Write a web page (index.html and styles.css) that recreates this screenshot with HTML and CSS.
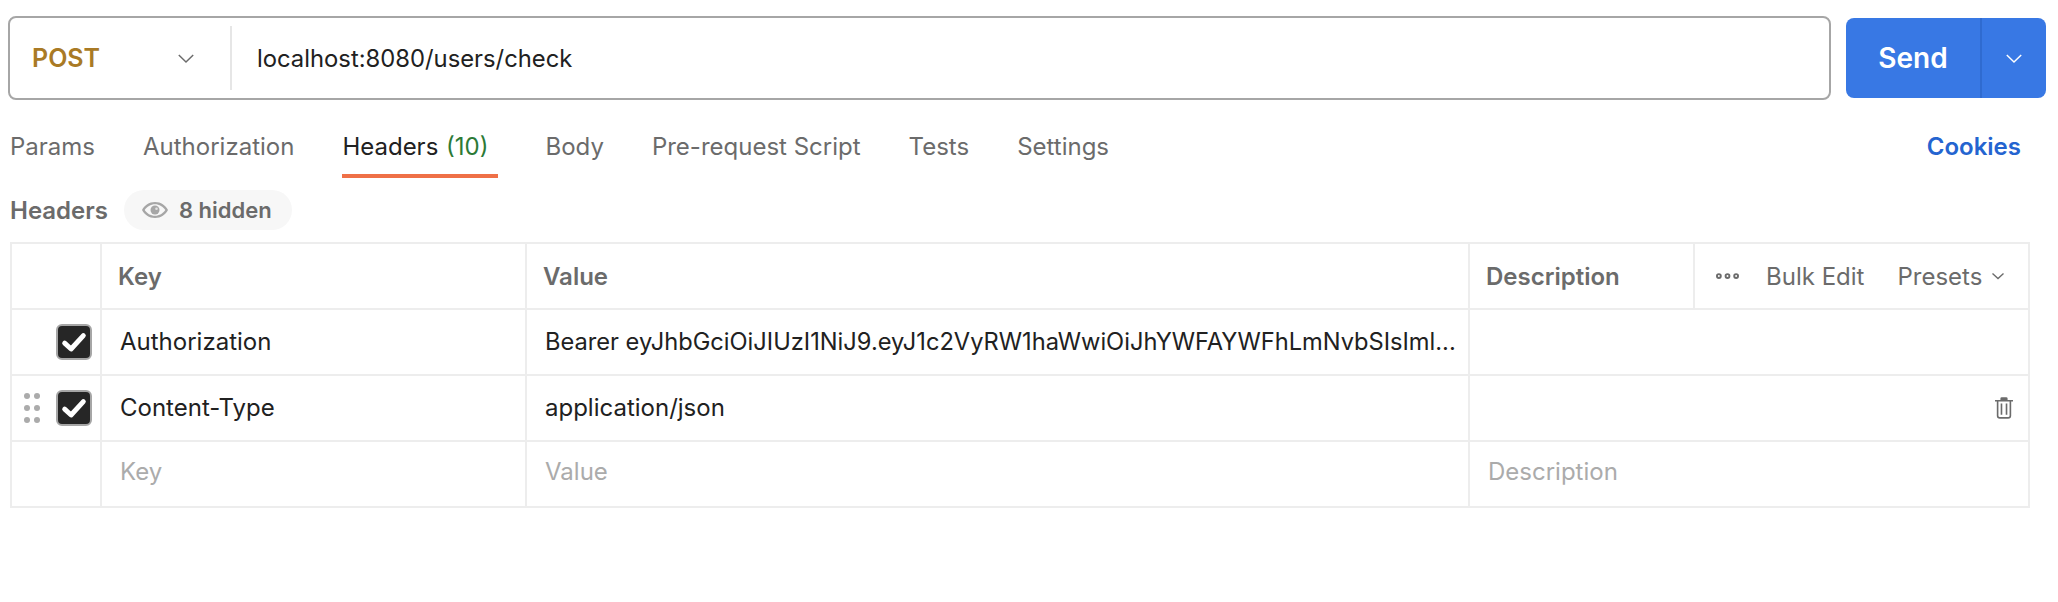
FILE: index.html
```html
<!DOCTYPE html>
<html lang="en">
<head>
<meta charset="utf-8">
<title>Request</title>
<link rel="stylesheet" href="styles.css">
</head>
<body>
<div class="request-bar">
  <div class="url-box">
    <div class="method"><span class="method-name">POST</span>
      <svg class="chev" viewBox="0 0 20 12"><path d="M2 2l8 8 8-8" fill="none" stroke="#6b6b6b" stroke-width="1.6"/></svg>
    </div>
    <div class="url">localhost:8080/users/check</div>
  </div>
  <div class="send">
    <div class="send-main">Send</div>
    <div class="send-more"><svg class="chev" viewBox="0 0 20 12"><path d="M2 2l8 8 8-8" fill="none" stroke="#fff" stroke-width="1.6"/></svg></div>
  </div>
</div>
<div class="tabs">
  <span class="tab">Params</span>
  <span class="tab">Authorization</span>
  <span class="tab active">Headers <span class="count">(10)</span></span>
  <span class="tab">Body</span>
  <span class="tab">Pre-request Script</span>
  <span class="tab">Tests</span>
  <span class="tab">Settings</span>
  <span class="cookies">Cookies</span>
</div>
<div class="subhead">
  <span class="subhead-title">Headers</span>
  <span class="pill">
    <svg class="eye" viewBox="0 0 26 16"><path fill-rule="evenodd" fill="#a6a6a6" d="M13 0C7 0 2.500 3.500 0 8c2.500 4.500 7 8 13 8s10.500-3.500 13-8c-2.500-4.500-7-8-13-8zm0 2.200c4.500 0 8 2.500 10.300 5.800-2.300 3.300-5.800 5.800-10.300 5.800S5 11.300 2.700 8C5 4.700 8.500 2.200 13 2.200z"/><circle cx="13" cy="8" r="4.500" fill="#a6a6a6"/><circle cx="14.500" cy="6.800" r="1.300" fill="#e2e2e2"/></svg>
    8 hidden
  </span>
</div>
<div class="table">
  <div class="row head">
    <div class="cell handle"></div>
    <div class="cell">Key</div>
    <div class="cell">Value</div>
    <div class="cell desc-head">
      <span class="desc-label">Description</span>
      <div class="actions">
        <svg class="dots" viewBox="0 0 24 6"><g fill="none" stroke="#6b6b6b" stroke-width="2"><circle cx="3" cy="3" r="2"/><circle cx="12" cy="3" r="2"/><circle cx="21" cy="3" r="2"/></g></svg>
        <span class="bulk">Bulk Edit</span>
        <span class="presets">Presets
          <svg class="chev-sm" viewBox="0 0 14 8"><path d="M1.500 1.500L7 6.500l5.500-5" fill="none" stroke="#6b6b6b" stroke-width="1.400"/></svg>
        </span>
      </div>
    </div>
  </div>
  <div class="row">
    <div class="cell handle">
      <span class="check"><svg viewBox="0 0 24 24"><path d="M4 13l5.500 5L20 6.500" fill="none" stroke="#fff" stroke-width="4.200" stroke-linecap="round" stroke-linejoin="round"/></svg></span>
    </div>
    <div class="cell">Authorization</div>
    <div class="cell"><span class="token">Bearer eyJhbGciOiJIUzI1NiJ9.eyJ1c2VyRW1haWwiOiJhYWFAYWFhLmNvbSIsIml...</span></div>
    <div class="cell"></div>
  </div>
  <div class="row">
    <div class="cell handle">
      <svg class="grip" viewBox="0 0 16 30"><g fill="#ababab"><circle cx="3" cy="3" r="3"/><circle cx="13" cy="3" r="3"/><circle cx="3" cy="15" r="3"/><circle cx="13" cy="15" r="3"/><circle cx="3" cy="27" r="3"/><circle cx="13" cy="27" r="3"/></g></svg>
      <span class="check"><svg viewBox="0 0 24 24"><path d="M4 13l5.500 5L20 6.500" fill="none" stroke="#fff" stroke-width="4.200" stroke-linecap="round" stroke-linejoin="round"/></svg></span>
    </div>
    <div class="cell">Content-Type</div>
    <div class="cell">application/json</div>
    <div class="cell trash-cell">
      <svg class="trash" viewBox="0 0 20 24"><g fill="none" stroke="#6b6b6b" stroke-width="1.800"><path d="M0 4h20M2.900 4v16.500a2.500 2.500 0 0 0 2.500 2.500h9.200a2.500 2.500 0 0 0 2.500-2.500V4M7.200 7v12.500M12.800 7v12.500"/></g><path d="M6 3.500V1.500A1.500 1.500 0 0 1 7.500 0h5A1.500 1.500 0 0 1 14 1.500v2z" fill="#6b6b6b"/></svg>
    </div>
  </div>
  <div class="row placeholder">
    <div class="cell handle"></div>
    <div class="cell">Key</div>
    <div class="cell">Value</div>
    <div class="cell">Description</div>
  </div>
</div>
</body>
</html>
```

FILE: styles.css
```css
* { box-sizing: border-box; }
html, body { margin: 0; background: #fff; }
body { font-family: Inter, "Liberation Sans", sans-serif; font-size: 24px; color: #212121; height: 602px; overflow: hidden; }

.request-bar { display: flex; align-items: center; gap: 15px; padding: 16px 12px 0 8px; }
.url-box { flex: 1; height: 84px; display: flex; align-items: center; border: 2px solid #a6a6a6; border-radius: 8px; padding-left: 22px; }
.method { width: 200px; height: 64px; display: flex; align-items: center; justify-content: space-between; padding-right: 35px; border-right: 2px solid #e6e6e6; }
.method-name { color: #a97a25; font-weight: 600; font-size: 25px; }
.chev { width: 18px; height: 11px; }
.url { padding-left: 25px; font-size: 23.800px; }
.send { width: 200px; height: 80px; display: flex; background: #3878e4; border-radius: 8px; color: #fff; }
.send-main { width: 136px; display: flex; align-items: center; justify-content: center; font-weight: 600; font-size: 28px; border-right: 2px solid #2f6bd0; }
.send-more { flex: 1; display: flex; align-items: center; justify-content: center; }

.tabs { display: flex; gap: 48px; height: 61px; margin-top: 17px; padding: 0 37px 0 10px; color: #6b6b6b; }
.tab { height: 61px; padding-top: 15px; white-space: nowrap; }
.tab.active { color: #212121; border-bottom: 4px solid #ef7047; padding-right: 9px; }
.count { color: #2c7a36; margin-left: 1px; }
.cookies { margin-left: auto; color: #2464d0; font-weight: 600; padding-top: 15px; }

.subhead { display: flex; align-items: center; gap: 16px; height: 40px; margin-top: 12px; padding-left: 10px; color: #6b6b6b; font-weight: 600; }
.pill { display: flex; align-items: center; gap: 11px; height: 40px; padding: 0 20px 0 18px; background: #f7f7f7; border-radius: 20px; font-size: 22px; }
.eye { width: 26px; height: 16px; }

.table { width: 2020px; margin: 12px 0 0 10px; border: 2px solid #ededed; border-bottom: 0; }
.row { display: grid; grid-template-columns: 90px 425px 943px 1fr; height: 66px; border-bottom: 2px solid #ededed; }
.cell { display: flex; align-items: center; padding: 0 8px 2px 18px; border-right: 2px solid #ededed; min-width: 0; white-space: nowrap; }
.cell:last-child { border-right: 0; }
.head .cell { color: #6b6b6b; font-weight: 600; padding: 0 8px 0 16px; }
.handle { justify-content: flex-end; gap: 16px; padding: 0 8px 0 0; }
.head .handle { padding: 0; }
.check { width: 36px; height: 36px; display: flex; align-items: center; justify-content: center; background: #262626; border: 2px solid #a6a6a6; border-radius: 6px; }
.check svg { width: 28px; height: 28px; }
.grip { width: 16px; height: 30px; }
.token { font-size: 23.650px; }
.head .desc-head { padding: 0; }
.desc-label { width: 225px; padding-left: 16px; align-self: stretch; display: flex; align-items: center; border-right: 2px solid #ededed; }
.actions { flex: 1; display: flex; align-items: center; font-weight: 400; padding-left: 21px; }
.dots { width: 23px; height: 6px; margin-right: 27px; }
.bulk { margin-right: 33px; }
.presets { display: flex; align-items: center; gap: 9px; }
.chev-sm { width: 14px; height: 8px; }
.trash-cell { justify-content: flex-end; padding: 0 15px 0 0; }
.trash { width: 18px; height: 24px; }
.placeholder .cell { color: #ababab; padding-bottom: 5px; }
```
